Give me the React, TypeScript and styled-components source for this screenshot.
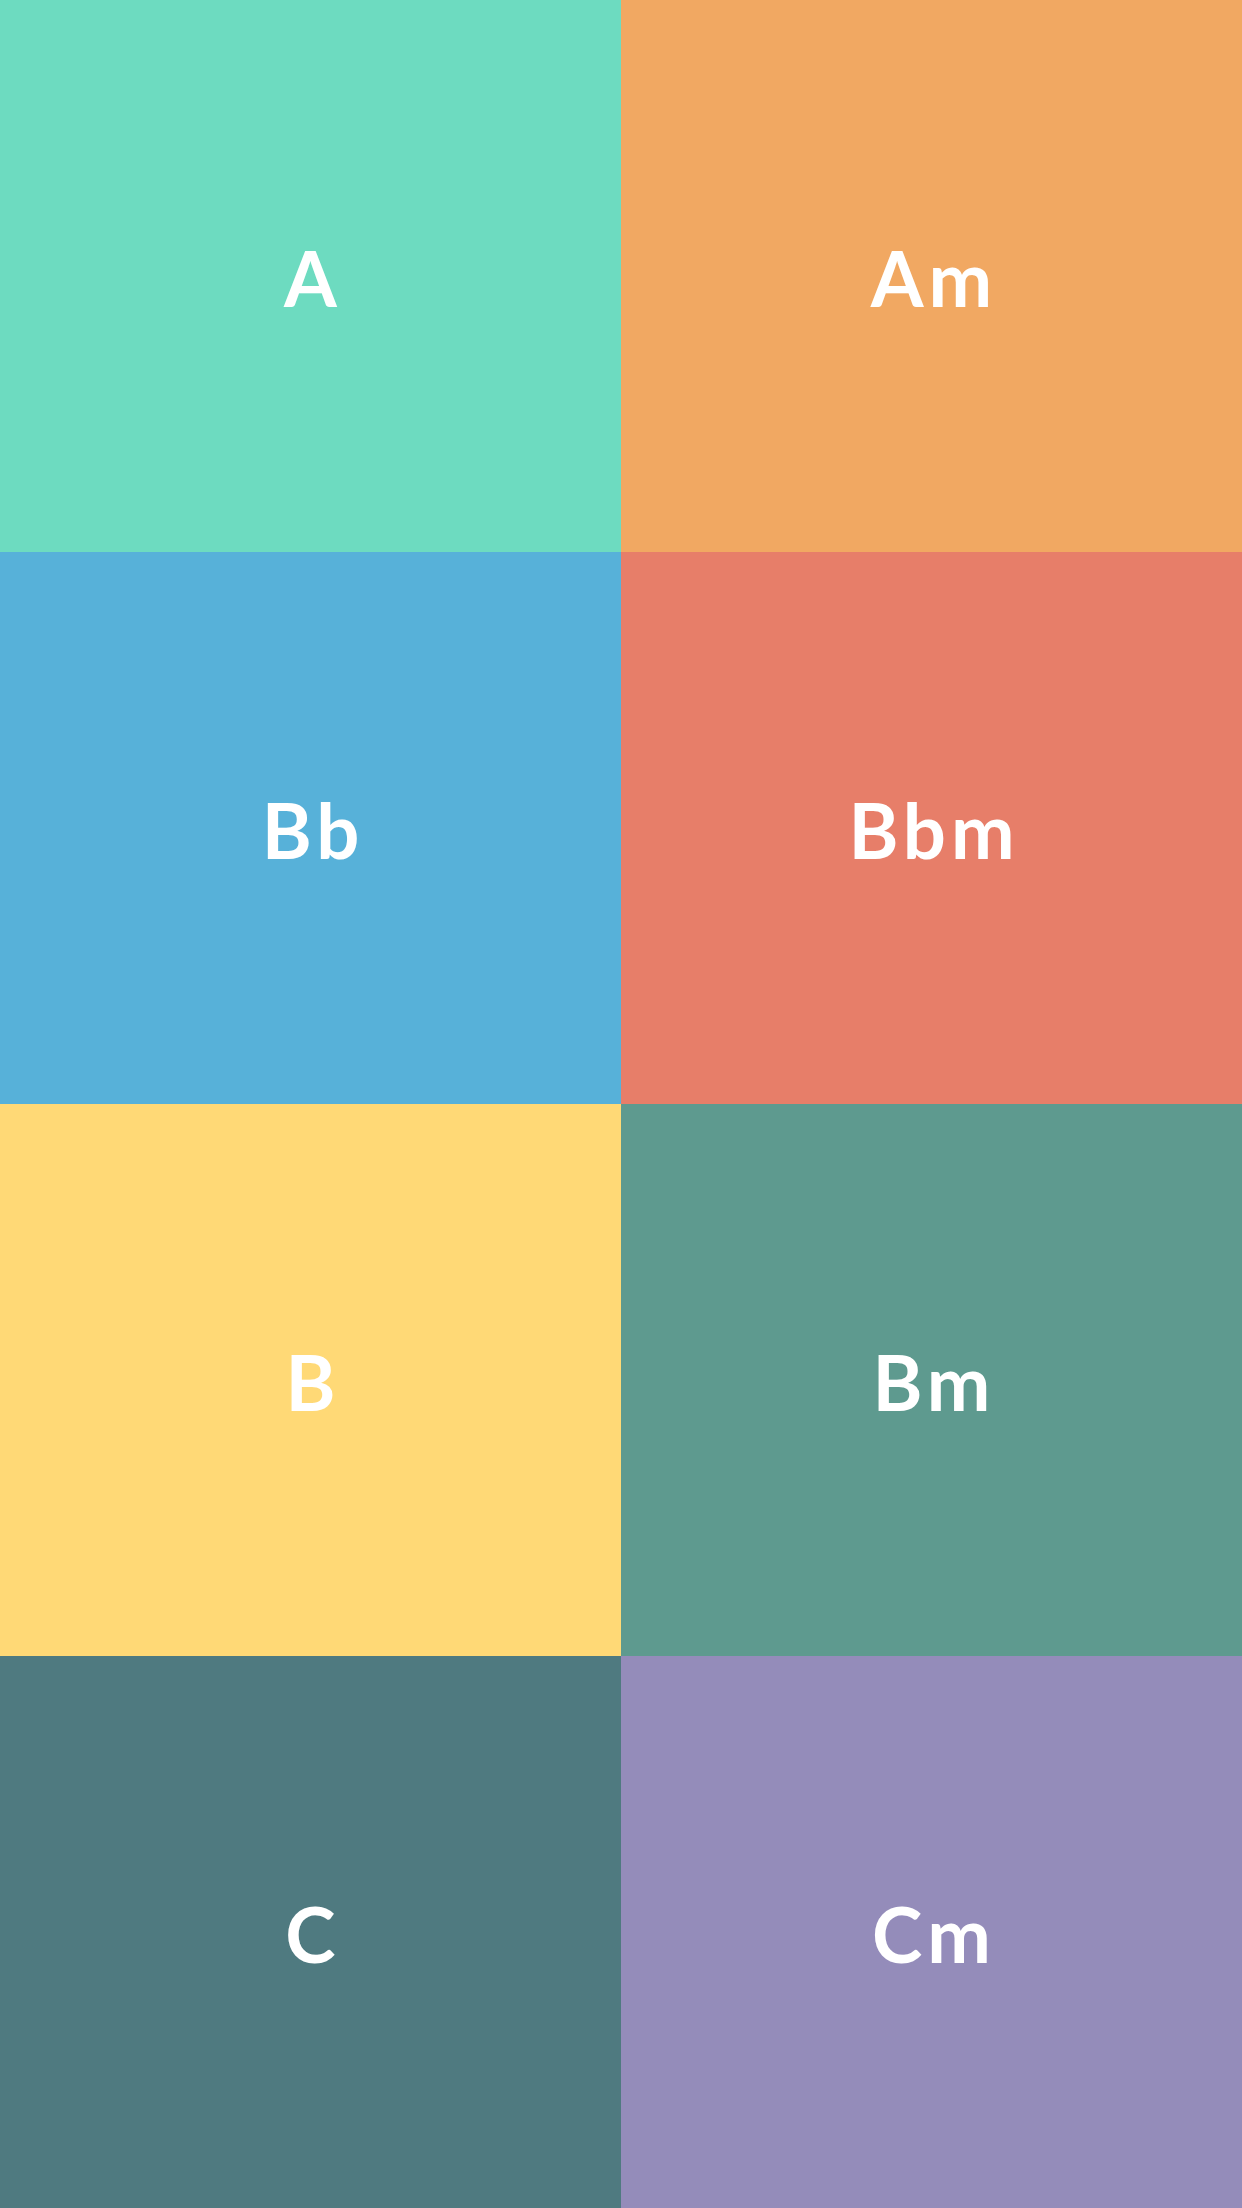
import styled, { createGlobalStyle } from "styled-components";

const GlobalStyle = createGlobalStyle`
  html, body {
    margin: 0;
    padding: 0;
    background: #ffffff;
  }
`;

const Grid = styled.div`
  display: grid;
  grid-template-columns: 621px 621px;
  grid-auto-rows: 552px;
  width: 1242px;
`;

const Tile = styled.button<{ $bg: string }>`
  display: flex;
  align-items: center;
  justify-content: center;
  border: none;
  margin: 0;
  padding: 4px 0 0 5px;
  background: ${(p) => p.$bg};
  color: #ffffff;
  font-family: "Lato", "DejaVu Sans", sans-serif;
  font-weight: 700;
  font-size: 76px;
  letter-spacing: 5px;
  line-height: 1;
  cursor: pointer;
`;

const chords = [
  { name: "A", color: "#6ddbc0" },
  { name: "Am", color: "#f1a862" },
  { name: "Bb", color: "#57b1d9" },
  { name: "Bbm", color: "#e77e69" },
  { name: "B", color: "#ffd976" },
  { name: "Bm", color: "#5e9a8f" },
  { name: "C", color: "#4f7a80" },
  { name: "Cm", color: "#948cba" },
];

const App = () => {
  return (
    <>
      <GlobalStyle />
      <Grid>
        {chords.map((c) => (
          <Tile key={c.name} $bg={c.color}>
            {c.name}
          </Tile>
        ))}
      </Grid>
    </>
  );
};

export default App;
